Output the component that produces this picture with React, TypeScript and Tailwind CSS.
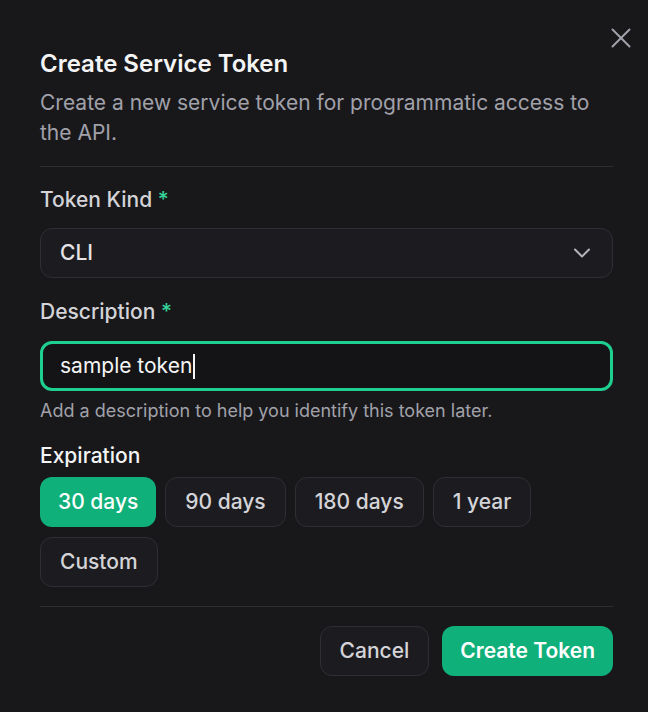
import React from "react";
import { ChevronDown, X } from "lucide-react";

export default function App() {
  const chips = ["30 days", "90 days", "180 days", "1 year", "Custom"];
  return (
    <div
      className="w-[648px] h-[712px] bg-[#18181b] text-[#e4e4e7] relative overflow-hidden"
      style={{ fontFamily: "Inter, 'Noto Sans', sans-serif" }}
    >
      <button className="absolute right-[10px] top-[21px] text-[#a1a1aa]">
        <X size={34} strokeWidth={1.4} />
      </button>
      <div className="px-[40px] pt-[50px] pr-[35px]">
        <div className="border-b border-[#2e2e33] pb-[18px]">
          <h2 className="text-[24px] leading-[28px] font-semibold text-[#f4f4f5]">
            Create Service Token
          </h2>
          <p className="mt-[10px] text-[21px] leading-[30px] text-[#a1a1aa]">
            Create a new service token for programmatic access to the API.
          </p>
        </div>

        <div className="mt-[18px] text-[21px] leading-[30px] font-medium text-[#d4d4d8]">
          Token Kind <span className="text-[#34d399]">*</span>
        </div>
        <div className="mt-[13px] h-[50px] rounded-[12px] border border-[#2e2e34] bg-[#1c1c20] flex items-center justify-between pl-[19px] pr-[16px]">
          <span className="text-[21px] font-medium text-[#e4e4e7]">CLI</span>
          <ChevronDown size={28} strokeWidth={1.7} className="text-[#b4b4bb]" />
        </div>

        <div className="mt-[19px] text-[21px] leading-[30px] font-medium text-[#d4d4d8]">
          Description <span className="text-[#34d399]">*</span>
        </div>
        <div className="mt-[14px] h-[50px] rounded-[12px] border-[3px] border-[#1ed090] bg-[#141417] flex items-center pl-[17px]">
          <span className="text-[21px] text-[#f4f4f5]">sample token</span>
          <span className="w-[2px] h-[25px] bg-[#f4f4f5] ml-[1px]" />
        </div>
        <p className="mt-[7px] text-[18px] leading-[25px] text-[#a1a1aa]">
          Add a description to help you identify this token later.
        </p>

        <div className="mt-[18px] text-[21px] leading-[30px] font-medium text-[#f4f4f5]">
          Expiration
        </div>
        <div className="mt-[6px] flex flex-wrap gap-x-[9px] gap-y-[10px] pb-[19px] border-b border-[#2e2e33]">
          {chips.map((c, i) =>
            i === 0 ? (
              <div
                key={c}
                className="h-[50px] px-[18px] rounded-[12px] bg-[#10b07a] text-white text-[21px] font-medium flex items-center"
              >
                {c}
              </div>
            ) : (
              <div
                key={c}
                className="h-[50px] px-[19px] rounded-[12px] border border-[#2e2e34] bg-[#1c1c20] text-[#d4d4d8] text-[21px] font-medium flex items-center"
              >
                {c}
              </div>
            )
          )}
        </div>

        <div className="mt-[19px] flex justify-end gap-[13px]">
          <div className="h-[50px] px-[19px] rounded-[12px] border border-[#2e2e34] bg-[#1c1c20] text-[#d4d4d8] text-[21px] font-medium flex items-center">
            Cancel
          </div>
          <div className="h-[50px] px-[18px] rounded-[12px] bg-[#10b07a] text-white text-[21px] font-semibold flex items-center">
            Create Token
          </div>
        </div>
      </div>
    </div>
  );
}
